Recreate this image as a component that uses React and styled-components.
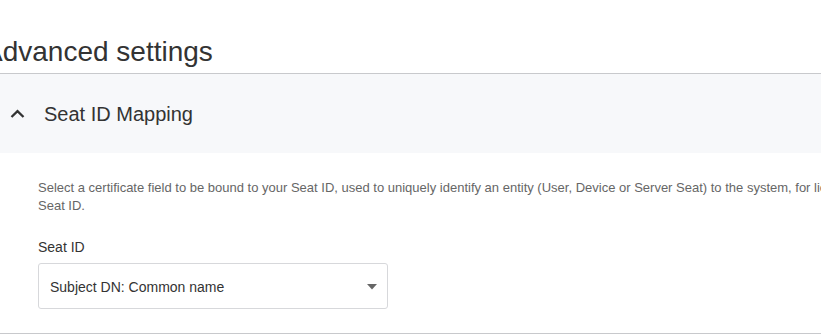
import React from 'react';
import styled, { createGlobalStyle } from 'styled-components';

const GlobalStyle = createGlobalStyle`
  html, body {
    margin: 0;
    padding: 0;
    background: #ffffff;
    overflow: hidden;
  }
  body {
    font-family: "Liberation Sans", Arial, Helvetica, sans-serif;
    color: #333333;
  }
`;

// the page is scrolled a little to the right, so the title's first letter is cut
const Page = styled.div`
  width: 1200px;
  margin-left: -16px;
`;

const Title = styled.h2`
  margin: 0;
  padding: 36px 0 5px;
  font-size: 28px;
  font-weight: 400;
  line-height: 32px;
  color: #333333;
  border-bottom: 1px solid #c8c9cc;
`;

const Section = styled.section`
  border-bottom: 1px solid #c8c9cc;
`;

const SectionHeader = styled.div`
  display: flex;
  align-items: center;
  gap: 19px;
  height: 79px;
  padding-left: 26px;
  background: #f7f8fa;
`;

const SectionTitle = styled.span`
  font-size: 20px;
  line-height: 24px;
  color: #333333;
`;

const SectionBody = styled.div`
  padding: 26px 0 24px 54px;
`;

const Description = styled.p`
  margin: 0;
  font-size: 13px;
  line-height: 18px;
  color: #666666;
  white-space: nowrap;
`;

const Field = styled.div`
  display: flex;
  flex-direction: column;
  gap: 8px;
  margin-top: 24px;
  width: 350px;
`;

const Label = styled.label`
  font-size: 14px;
  line-height: 16px;
  color: #333333;
`;

const Select = styled.div`
  display: flex;
  align-items: center;
  justify-content: space-between;
  box-sizing: border-box;
  height: 46px;
  padding: 2px 10px 0 11px;
  border: 1px solid #d7d8db;
  border-radius: 3px;
  background: #ffffff;
  font-size: 14px;
  color: #333333;
`;

const Chevron = () => (
  <svg width="15" height="10" viewBox="0 0 15 10">
    <path d="M1.5 8 L7.5 2.2 L13.5 8" fill="none" stroke="#333" strokeWidth="2.3" />
  </svg>
);

const Caret = () => (
  <svg width="10" height="6" viewBox="0 0 10 6">
    <path d="M0 0 H10 L5 5.5 Z" fill="#666" />
  </svg>
);

const App = () => (
  <>
    <GlobalStyle />
    <Page>
      <Title>Advanced settings</Title>
      <Section>
        <SectionHeader>
          <Chevron />
          <SectionTitle>Seat ID Mapping</SectionTitle>
        </SectionHeader>
        <SectionBody>
          <Description>
            Select a certificate field to be bound to your Seat ID, used to uniquely identify an entity (User, Device or Server Seat) to the system, for licensing. Its value is used as the
            <br />
            Seat ID.
          </Description>
          <Field>
            <Label>Seat ID</Label>
            <Select>
              <span>Subject DN: Common name</span>
              <Caret />
            </Select>
          </Field>
        </SectionBody>
      </Section>
    </Page>
  </>
);

export default App;
